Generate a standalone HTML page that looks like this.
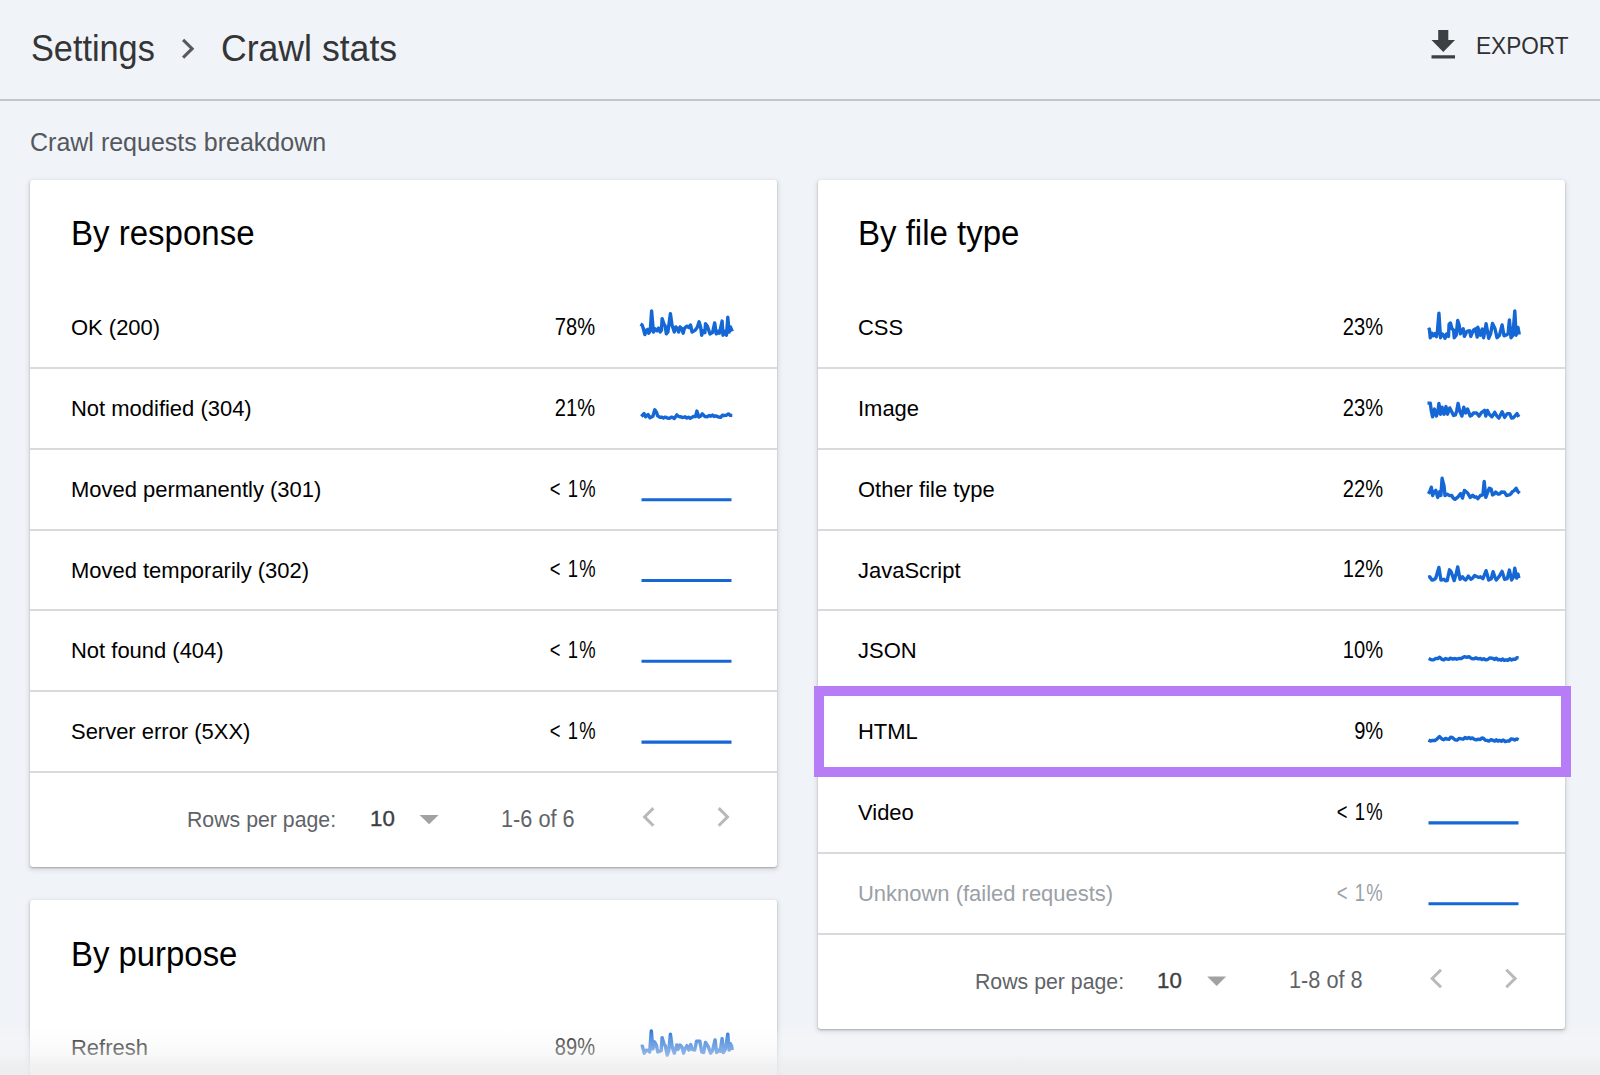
<!DOCTYPE html>
<html><head><meta charset="utf-8">
<style>
html,body{margin:0;padding:0;}
body{width:1600px;height:1075px;overflow:hidden;background:#f0f3f8;position:relative;font-family:"Liberation Sans",sans-serif;}
.t{position:absolute;white-space:nowrap;line-height:1;}
.hdr{position:absolute;left:0;top:99px;width:1600px;height:2px;background:#c4c5c8;}
.card{position:absolute;background:#fff;border-radius:3px;box-shadow:0 1px 2px 0 rgba(60,64,67,.35),0 2px 5px 1px rgba(60,64,67,.15);}
.dv{position:absolute;height:2px;background:#dadada;}
.fade{position:absolute;left:0;top:1026px;width:1600px;height:49px;background:linear-gradient(to bottom,rgba(250,250,250,0) 0px,rgba(249,249,249,0.3) 12px,rgba(244,244,244,0.55) 28px,rgba(237,237,238,0.78) 40px,rgba(236,236,237,0.82) 49px);}
</style></head><body>
<div class="t" style="left:30.50px;top:30.50px;font-size:36.3px;transform:scaleX(0.944);transform-origin:0 0;color:#343537">Settings</div>
<div class="t" style="left:221.00px;top:30.70px;font-size:36.3px;transform:scaleX(0.981);transform-origin:0 0;color:#343537">Crawl stats</div>
<div class="t" style="left:1476.20px;top:33.50px;font-size:24.3px;transform:scaleX(0.93);transform-origin:0 0;color:#2f3033">EXPORT</div>
<div class="hdr"></div>
<div class="t" style="left:30.30px;top:129.90px;font-size:24.9px;transform:scaleX(1.005);transform-origin:0 0;color:#54585d">Crawl requests breakdown</div>
<div class="card" style="left:30px;top:180px;width:747px;height:687px"></div>
<div class="card" style="left:818px;top:180px;width:747px;height:849px"></div>
<div class="card" style="left:30px;top:900px;width:747px;height:400px"></div>
<div class="t" style="left:70.50px;top:215.60px;font-size:34.4px;transform:scaleX(0.96);transform-origin:0 0;color:#000">By response</div>
<div class="t" style="left:857.60px;top:215.60px;font-size:34.4px;transform:scaleX(0.96);transform-origin:0 0;color:#000">By file type</div>
<div class="t" style="left:70.50px;top:936.90px;font-size:34.2px;transform:scaleX(0.962);transform-origin:0 0;color:#000">By purpose</div>
<div class="t" style="left:70.60px;top:317.10px;font-size:22.3px;transform:scaleX(0.985);transform-origin:0 0;color:#000">OK (200)</div>
<div class="t" style="right:1004.80px;top:316.00px;font-size:23.0px;transform:scaleX(0.875);transform-origin:100% 0;color:#000">78%</div>
<div class="dv" style="left:30px;top:367px;width:747px"></div>
<div class="t" style="left:70.60px;top:397.90px;font-size:22.3px;transform:scaleX(0.985);transform-origin:0 0;color:#000">Not modified (304)</div>
<div class="t" style="right:1004.80px;top:396.80px;font-size:23.0px;transform:scaleX(0.875);transform-origin:100% 0;color:#000">21%</div>
<div class="dv" style="left:30px;top:448px;width:747px"></div>
<div class="t" style="left:70.60px;top:478.70px;font-size:22.3px;transform:scaleX(0.985);transform-origin:0 0;color:#000">Moved permanently (301)</div>
<div class="t" style="right:1003.80px;top:477.60px;font-size:23.0px;transform:scaleX(0.8);transform-origin:100% 0;color:#000;letter-spacing:1.4px">&lt; 1%</div>
<div class="dv" style="left:30px;top:529px;width:747px"></div>
<div class="t" style="left:70.60px;top:559.50px;font-size:22.3px;transform:scaleX(0.985);transform-origin:0 0;color:#000">Moved temporarily (302)</div>
<div class="t" style="right:1003.80px;top:558.40px;font-size:23.0px;transform:scaleX(0.8);transform-origin:100% 0;color:#000;letter-spacing:1.4px">&lt; 1%</div>
<div class="dv" style="left:30px;top:609px;width:747px"></div>
<div class="t" style="left:70.60px;top:640.30px;font-size:22.3px;transform:scaleX(0.985);transform-origin:0 0;color:#000">Not found (404)</div>
<div class="t" style="right:1003.80px;top:639.20px;font-size:23.0px;transform:scaleX(0.8);transform-origin:100% 0;color:#000;letter-spacing:1.4px">&lt; 1%</div>
<div class="dv" style="left:30px;top:690px;width:747px"></div>
<div class="t" style="left:70.60px;top:721.10px;font-size:22.3px;transform:scaleX(0.985);transform-origin:0 0;color:#000">Server error (5XX)</div>
<div class="t" style="right:1003.80px;top:720.00px;font-size:23.0px;transform:scaleX(0.8);transform-origin:100% 0;color:#000;letter-spacing:1.4px">&lt; 1%</div>
<div class="dv" style="left:30px;top:771px;width:747px"></div>
<div class="t" style="left:858.20px;top:317.10px;font-size:22.3px;transform:scaleX(0.985);transform-origin:0 0;color:#000">CSS</div>
<div class="t" style="right:217.20px;top:316.00px;font-size:23.0px;transform:scaleX(0.875);transform-origin:100% 0;color:#000">23%</div>
<div class="dv" style="left:818px;top:367px;width:747px"></div>
<div class="t" style="left:858.20px;top:397.90px;font-size:22.3px;transform:scaleX(0.985);transform-origin:0 0;color:#000">Image</div>
<div class="t" style="right:217.20px;top:396.80px;font-size:23.0px;transform:scaleX(0.875);transform-origin:100% 0;color:#000">23%</div>
<div class="dv" style="left:818px;top:448px;width:747px"></div>
<div class="t" style="left:858.20px;top:478.70px;font-size:22.3px;transform:scaleX(0.985);transform-origin:0 0;color:#000">Other file type</div>
<div class="t" style="right:217.20px;top:477.60px;font-size:23.0px;transform:scaleX(0.875);transform-origin:100% 0;color:#000">22%</div>
<div class="dv" style="left:818px;top:529px;width:747px"></div>
<div class="t" style="left:858.20px;top:559.50px;font-size:22.3px;transform:scaleX(0.985);transform-origin:0 0;color:#000">JavaScript</div>
<div class="t" style="right:217.20px;top:558.40px;font-size:23.0px;transform:scaleX(0.875);transform-origin:100% 0;color:#000">12%</div>
<div class="dv" style="left:818px;top:609px;width:747px"></div>
<div class="t" style="left:858.20px;top:640.30px;font-size:22.3px;transform:scaleX(0.985);transform-origin:0 0;color:#000">JSON</div>
<div class="t" style="right:217.20px;top:639.20px;font-size:23.0px;transform:scaleX(0.875);transform-origin:100% 0;color:#000">10%</div>
<div class="dv" style="left:818px;top:690px;width:747px"></div>
<div class="t" style="left:858.20px;top:721.10px;font-size:22.3px;transform:scaleX(0.985);transform-origin:0 0;color:#000">HTML</div>
<div class="t" style="right:217.20px;top:720.00px;font-size:23.0px;transform:scaleX(0.875);transform-origin:100% 0;color:#000">9%</div>
<div class="dv" style="left:818px;top:771px;width:747px"></div>
<div class="t" style="left:858.20px;top:801.90px;font-size:22.3px;transform:scaleX(0.985);transform-origin:0 0;color:#000">Video</div>
<div class="t" style="right:216.20px;top:800.80px;font-size:23.0px;transform:scaleX(0.8);transform-origin:100% 0;color:#000;letter-spacing:1.4px">&lt; 1%</div>
<div class="dv" style="left:818px;top:852px;width:747px"></div>
<div class="t" style="left:858.20px;top:882.70px;font-size:22.3px;transform:scaleX(0.985);transform-origin:0 0;color:#9aa0a6">Unknown (failed requests)</div>
<div class="t" style="right:216.20px;top:881.60px;font-size:23.0px;transform:scaleX(0.8);transform-origin:100% 0;color:#9aa0a6;letter-spacing:1.4px">&lt; 1%</div>
<div class="dv" style="left:818px;top:933px;width:747px"></div>
<div class="t" style="left:187.30px;top:808.10px;font-size:22.9px;transform:scaleX(0.93);transform-origin:0 0;color:#5f6368">Rows per page:</div>
<div class="t" style="left:369.60px;top:807.90px;font-size:22.6px;transform:scaleX(0.985);transform-origin:0 0;-webkit-text-stroke:0.4px #3c4043;color:#3c4043">10</div>
<div class="t" style="left:501.20px;top:807.80px;font-size:23.3px;transform:scaleX(0.933);transform-origin:0 0;color:#5f6368">1-6 of 6</div>
<div class="t" style="left:974.90px;top:969.70px;font-size:22.9px;transform:scaleX(0.93);transform-origin:0 0;color:#5f6368">Rows per page:</div>
<div class="t" style="left:1157.20px;top:969.50px;font-size:22.6px;transform:scaleX(0.985);transform-origin:0 0;-webkit-text-stroke:0.4px #3c4043;color:#3c4043">10</div>
<div class="t" style="left:1288.80px;top:969.40px;font-size:23.3px;transform:scaleX(0.933);transform-origin:0 0;color:#5f6368">1-8 of 8</div>
<div class="t" style="left:70.60px;top:1037.10px;font-size:22.3px;transform:scaleX(0.985);transform-origin:0 0;color:#000">Refresh</div>
<div class="t" style="right:1004.80px;top:1036.00px;font-size:23.0px;transform:scaleX(0.875);transform-origin:100% 0;color:#000">89%</div>
<div style="position:absolute;left:814px;top:686px;width:757px;height:91px;box-sizing:border-box;border:10px solid #b67df6"></div>
<svg style="position:absolute;left:0;top:0" width="1600" height="1075">
<polyline points="183.1,39.8 192.1,48.7 183.1,57.6" fill="none" stroke="#57595c" stroke-width="3.1"/>
<g transform="translate(1423.1,25) scale(1.68)"><path d="M19 9h-4V3H9v6H5l7 7 7-7zM5 18v2h14v-2H5z" fill="#3c4043"/></g>
<polygon points="419.6,815.0 438.6,815.0 429.1,824.3" fill="#a2a2a2" transform="translate(0,0)"/>
<polyline points="653.4,808.1 644.6,816.9 653.4,825.7" fill="none" stroke="#b9b9b9" stroke-width="3" transform="translate(0,0)"/>
<polyline points="718.7,808.1 727.5,816.9 718.7,825.7" fill="none" stroke="#b9b9b9" stroke-width="3" transform="translate(0,0)"/>
<polygon points="1207.2,815.0 1226.2,815.0 1216.7,824.3" fill="#a2a2a2" transform="translate(0,161.60000000000002)"/>
<polyline points="1441.0,808.1 1432.2,816.9 1441.0,825.7" fill="none" stroke="#b9b9b9" stroke-width="3" transform="translate(0,161.60000000000002)"/>
<polyline points="1506.3000000000002,808.1 1515.1,816.9 1506.3000000000002,825.7" fill="none" stroke="#b9b9b9" stroke-width="3" transform="translate(0,161.60000000000002)"/>
<polyline points="640.5,324.0 642.1,325.0 643.0,327.5 644.9,334.5 646.5,330.1 647.8,329.4 648.8,333.2 650.3,330.7 651.6,310.9 652.9,326.2 653.5,332.0 655.1,328.8 657.0,330.7 658.6,328.1 660.2,332.0 661.5,330.1 662.1,318.6 664.1,324.3 665.3,326.2 666.3,333.9 667.9,332.0 670.4,313.8 672.0,325.0 674.3,332.0 675.8,326.9 677.4,328.8 678.7,332.0 680.0,326.9 681.9,328.8 683.2,333.2 684.5,328.1 687.0,326.2 688.9,327.5 690.5,325.0 692.1,332.0 695.3,330.1 697.2,327.5 699.1,321.8 700.7,327.5 701.7,335.2 702.9,330.7 704.9,332.6 705.5,323.7 707.4,326.2 710.0,333.9 712.5,332.6 714.7,323.0 716.3,333.9 718.2,331.3 719.5,333.2 722.1,321.1 723.0,335.2 724.6,331.3 726.5,335.2 727.8,317.3 729.1,332.0 730.4,326.9 732.3,331.3" fill="none" stroke="#1467d4" stroke-width="3.4" stroke-linejoin="round" stroke-linecap="butt"/>
<polyline points="641.4,416.5 644.0,413.6 645.6,416.8 648.1,414.6 650.0,417.8 652.9,416.2 654.8,409.8 656.7,412.7 657.7,415.9 659.6,417.2 661.5,417.1 663.4,418.1 665.3,417.1 667.2,418.1 669.5,418.3 671.7,417.1 674.3,418.4 676.8,414.9 678.7,416.6 680.6,416.8 682.9,417.5 685.1,416.8 686.8,418.0 688.5,417.2 690.2,418.4 693.4,416.5 695.6,416.5 696.9,411.1 698.8,417.1 700.5,416.2 702.3,413.9 704.9,416.5 707.1,416.7 709.3,415.5 710.9,416.3 712.5,415.0 714.1,416.5 715.7,415.9 718.9,417.1 720.6,417.3 722.3,415.3 724.0,415.5 726.2,415.4 728.4,413.9 730.3,415.4 732.3,415.5" fill="none" stroke="#1467d4" stroke-width="3.4" stroke-linejoin="round" stroke-linecap="butt"/>
<polyline points="1428.1,330.1 1429.4,329.1 1430.3,337.7 1431.9,333.2 1433.5,335.8 1435.1,333.6 1436.4,336.7 1437.3,332.6 1438.9,313.2 1440.5,337.7 1442.1,333.9 1443.7,335.2 1445.0,338.3 1446.6,333.9 1448.5,336.4 1449.1,324.3 1450.4,323.0 1452.0,328.8 1453.6,330.1 1454.2,337.7 1456.2,335.2 1457.7,320.5 1459.3,325.6 1460.3,333.9 1463.2,328.8 1464.4,336.4 1467.0,331.3 1469.5,330.7 1470.8,336.4 1473.4,330.1 1475.3,328.8 1477.2,337.1 1477.8,327.2 1480.4,335.2 1482.3,329.1 1483.6,337.7 1486.1,323.7 1488.7,338.3 1490.6,333.9 1492.5,323.4 1495.0,328.8 1497.0,337.7 1499.5,335.2 1502.1,325.0 1504.0,335.8 1505.9,335.2 1508.1,333.9 1509.4,319.9 1511.0,337.7 1512.9,335.2 1514.8,310.9 1516.1,335.2 1518.0,327.5 1519.3,334.5" fill="none" stroke="#1467d4" stroke-width="3.4" stroke-linejoin="round" stroke-linecap="butt"/>
<polyline points="1427.5,403.1 1430.3,403.1 1431.3,411.0 1432.6,416.8 1434.5,409.1 1436.4,416.1 1438.0,411.0 1438.9,403.4 1440.5,414.2 1442.1,407.2 1444.0,414.2 1446.0,406.6 1447.5,414.2 1449.8,407.9 1451.7,411.7 1453.6,415.5 1455.5,414.9 1456.8,410.4 1458.1,403.4 1459.7,411.0 1461.9,416.1 1463.8,407.2 1465.7,413.0 1467.6,409.1 1470.2,416.1 1471.8,415.2 1473.4,413.0 1476.6,413.0 1479.1,416.1 1481.7,412.3 1484.5,410.4 1485.8,416.1 1487.4,410.4 1489.3,414.2 1491.9,416.8 1494.7,412.3 1496.8,415.9 1498.9,418.1 1502.1,411.7 1504.6,417.4 1507.2,413.6 1509.7,413.6 1511.6,418.1 1513.2,417.8 1514.8,416.1 1517.0,413.6 1518.9,416.8" fill="none" stroke="#1467d4" stroke-width="3.4" stroke-linejoin="round" stroke-linecap="butt"/>
<polyline points="1428.4,493.9 1429.7,491.7 1431.3,487.2 1432.6,495.5 1434.2,491.7 1435.8,490.4 1437.7,497.4 1439.6,491.7 1440.9,495.5 1442.1,478.3 1444.0,485.9 1445.0,495.5 1447.2,494.2 1449.5,495.6 1451.7,495.5 1453.3,498.1 1454.9,499.3 1458.1,496.8 1460.6,493.6 1462.5,498.1 1464.4,490.4 1467.6,493.0 1470.2,497.4 1472.7,495.2 1474.4,497.1 1476.1,496.8 1477.8,498.7 1480.4,495.5 1482.9,494.9 1484.2,481.5 1485.8,497.4 1487.4,493.0 1489.3,488.2 1491.2,489.1 1492.5,494.9 1494.1,494.1 1495.7,492.0 1498.2,494.2 1499.8,493.8 1501.4,492.0 1504.6,492.3 1506.5,495.5 1509.1,494.9 1510.7,494.0 1512.3,491.7 1514.2,490.6 1516.1,488.2 1518.0,491.7 1519.6,493.3" fill="none" stroke="#1467d4" stroke-width="3.4" stroke-linejoin="round" stroke-linecap="butt"/>
<polyline points="1428.1,577.1 1429.7,576.8 1431.9,580.0 1433.8,579.8 1435.8,578.1 1438.9,567.5 1440.9,580.0 1444.0,579.3 1445.6,580.7 1447.2,580.6 1449.5,569.8 1451.1,571.7 1454.2,580.6 1456.0,574.5 1457.7,566.9 1460.0,579.3 1462.5,576.8 1464.1,579.1 1465.7,580.0 1468.3,576.1 1470.8,579.3 1472.7,578.1 1474.6,575.5 1477.2,576.8 1478.8,577.5 1480.4,576.8 1482.9,578.7 1486.1,570.7 1488.7,580.0 1491.2,578.7 1493.1,571.7 1494.7,576.6 1496.3,580.0 1498.9,576.8 1502.1,571.4 1504.6,579.3 1507.2,578.7 1509.4,570.1 1511.6,580.0 1513.5,576.8 1514.8,568.2 1516.7,578.1 1518.0,574.2 1518.9,578.1" fill="none" stroke="#1467d4" stroke-width="3.4" stroke-linejoin="round" stroke-linecap="butt"/>
<polyline points="1428.7,658.5 1431.3,659.8 1433.5,659.9 1435.8,658.5 1437.7,658.6 1439.6,657.2 1442.1,659.4 1443.8,660.0 1445.5,658.5 1447.2,659.1 1448.8,659.4 1450.4,658.2 1452.7,659.1 1454.9,658.5 1456.8,659.2 1458.7,658.5 1461.3,658.5 1464.4,656.6 1466.7,657.3 1468.9,656.6 1471.5,658.5 1473.7,658.9 1475.9,657.9 1478.2,658.9 1480.4,658.5 1482.1,659.6 1483.8,658.7 1485.5,659.8 1487.7,659.5 1489.9,657.9 1493.1,658.5 1494.7,659.4 1496.3,658.2 1497.9,659.9 1499.5,659.4 1501.1,660.2 1502.7,658.9 1504.3,660.4 1505.9,659.8 1507.8,660.3 1509.7,658.8 1511.6,660.0 1513.5,659.1 1515.2,659.4 1516.9,657.6 1518.6,657.9" fill="none" stroke="#1467d4" stroke-width="3.4" stroke-linejoin="round" stroke-linecap="butt"/>
<polyline points="1428.4,740.1 1430.5,741.0 1432.6,740.4 1434.8,740.5 1437.0,739.1 1439.6,736.6 1442.1,739.1 1443.8,739.8 1445.5,738.4 1447.2,739.1 1448.9,739.3 1450.6,737.3 1452.3,737.5 1454.9,739.8 1457.0,740.2 1459.2,738.4 1461.3,738.8 1463.2,739.2 1465.1,737.4 1467.0,738.5 1468.9,737.5 1470.6,738.7 1472.3,737.9 1474.0,739.1 1476.2,739.8 1478.5,739.1 1480.2,739.6 1481.9,738.0 1483.6,738.5 1485.2,740.2 1486.8,740.4 1488.9,741.1 1491.0,739.7 1493.1,740.4 1494.7,741.1 1496.3,739.7 1497.9,741.1 1499.5,740.4 1501.4,741.2 1503.3,740.0 1505.3,741.6 1507.2,741.0 1509.1,741.1 1511.0,739.0 1512.9,739.1 1514.8,740.0 1516.7,738.9 1518.6,739.8" fill="none" stroke="#1467d4" stroke-width="3.4" stroke-linejoin="round" stroke-linecap="butt"/>
<polyline points="641.5,499.7 731.5,499.7" fill="none" stroke="#1467d4" stroke-width="3.1" stroke-linejoin="round" stroke-linecap="butt"/>
<polyline points="641.5,580.5 731.5,580.5" fill="none" stroke="#1467d4" stroke-width="3.1" stroke-linejoin="round" stroke-linecap="butt"/>
<polyline points="641.5,661.3 731.5,661.3" fill="none" stroke="#1467d4" stroke-width="3.1" stroke-linejoin="round" stroke-linecap="butt"/>
<polyline points="641.5,742.1 731.5,742.1" fill="none" stroke="#1467d4" stroke-width="3.1" stroke-linejoin="round" stroke-linecap="butt"/>
<polyline points="1428.5,822.9 1518.5,822.9" fill="none" stroke="#1467d4" stroke-width="3.1" stroke-linejoin="round" stroke-linecap="butt"/>
<polyline points="1428.5,903.7 1518.5,903.7" fill="none" stroke="#1467d4" stroke-width="3.1" stroke-linejoin="round" stroke-linecap="butt"/>
<polyline points="640.8,1046.5 642.4,1046.2 644.3,1053.2 646.2,1050.1 648.4,1050.7 649.7,1052.0 651.3,1030.9 652.9,1048.8 654.5,1041.8 656.4,1045.0 657.7,1052.0 659.6,1051.3 661.2,1050.7 662.1,1037.6 664.1,1044.3 665.3,1045.6 667.2,1055.2 668.8,1050.7 670.4,1034.1 672.3,1047.5 674.3,1053.2 676.8,1045.0 678.1,1049.4 680.0,1045.0 681.9,1046.9 683.5,1053.2 685.1,1048.8 687.0,1045.6 688.9,1050.1 690.8,1044.6 692.1,1049.4 694.7,1050.1 696.6,1041.1 699.8,1041.1 701.7,1052.0 703.6,1052.6 705.5,1042.4 708.0,1046.2 710.6,1053.2 712.5,1050.7 715.1,1039.9 716.6,1052.6 718.9,1050.1 720.2,1051.3 722.1,1038.6 723.3,1052.6 725.3,1049.4 727.8,1034.1 729.1,1050.1 730.4,1043.7 731.6,1046.2 732.3,1050.1" fill="none" stroke="#1467d4" stroke-width="3.4" stroke-linejoin="round" stroke-linecap="butt"/>
</svg>
<div class="fade"></div>
</body></html>
